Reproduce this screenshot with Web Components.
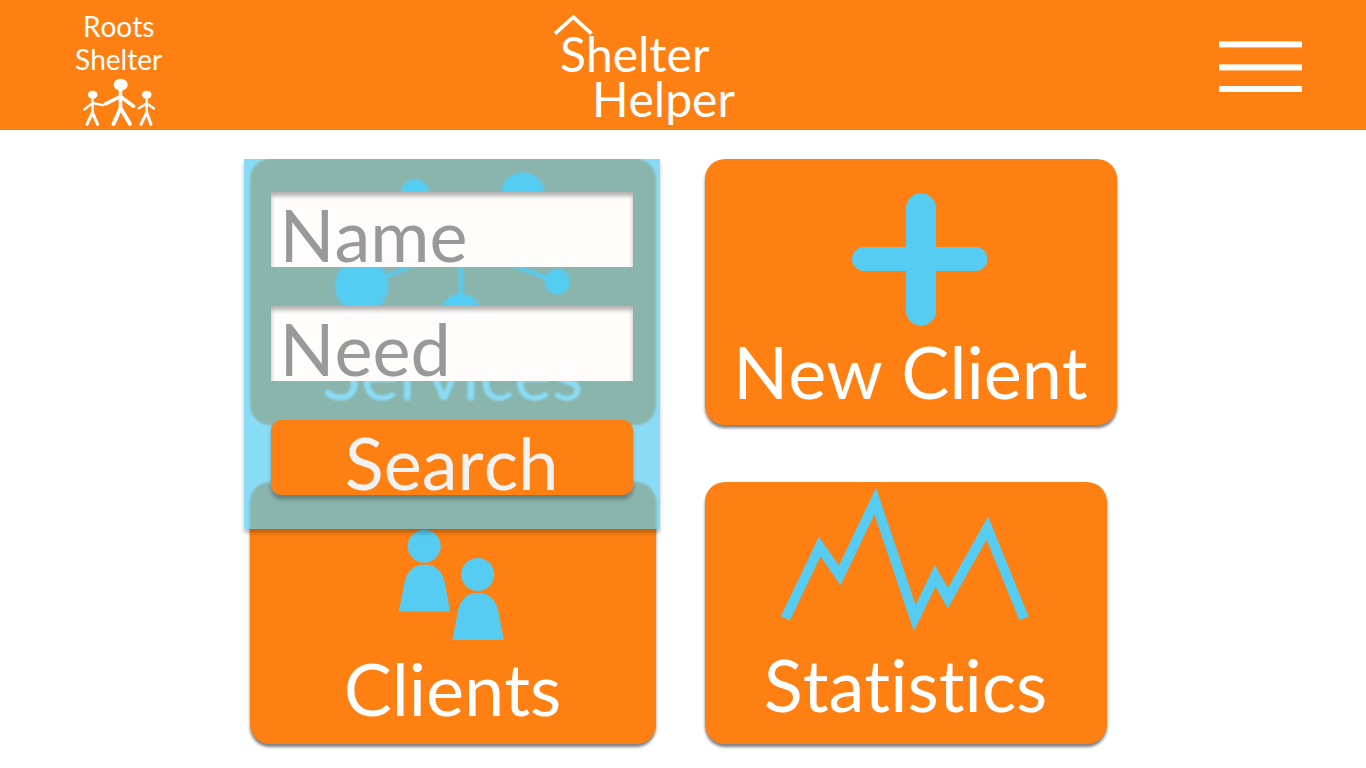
<!DOCTYPE html>
<html lang="en">
<head>
<meta charset="utf-8">
<meta name="viewport" content="width=device-width, initial-scale=1">
<title>Shelter Helper</title>
<style>
  :root {
    --orange: #ff8012;
    --blue: #56ccf2;
    --label-size: 72px;
  }
  body {
    margin: 0;
    background: #fff;
    font-family: Lato, "Open Sans", sans-serif;
    font-variant-ligatures: none;
    font-kerning: none;
  }
</style>
</head>
<body>
<shelter-app></shelter-app>

<script>
const define = (name, html) => {
  const template = document.createElement('template');
  template.innerHTML = html;
  customElements.define(name, class extends HTMLElement {
    constructor() {
      super();
      this.attachShadow({ mode: 'open' }).append(template.content.cloneNode(true));
    }
  });
};

define('shelter-badge', `
  <style>
    :host { display: block; }
    a {
      display: flex; flex-direction: column; align-items: center; gap: 2px;
      color: #fff; text-decoration: none; text-align: center;
      font-size: 28px; line-height: 33px;
    }
    span { display: block; }
    svg { display: block; }
  </style>
  <a href="#">
    <span><slot></slot></span>
    <svg width="74" height="49" viewBox="0 0 74 49" fill="none" stroke="#fff" stroke-linecap="round" aria-hidden="true">
      <g fill="#fff" stroke="none">
        <ellipse cx="38.7" cy="6.7" rx="7" ry="6"/>
        <ellipse cx="10.7" cy="16.7" rx="4.8" ry="4"/>
        <ellipse cx="64.7" cy="16.7" rx="4.8" ry="4"/>
      </g>
      <g stroke-width="3.6">
        <path d="M38.5 10V30M23.5 25.8L38.5 18.5L51.5 28.2"/>
        <path d="M31.5 46L38.6 30L48 46" stroke-width="4"/>
      </g>
      <g stroke-width="2.4">
        <path d="M10.6 18V35M2.2 31.6L10.5 25L21 27.2M56.8 30.2L64.7 25.4L72 30.4M64.7 18V35"/>
        <path d="M5 46.4L10.5 34.6L15.6 46.4M59 46.4L64.7 34.6L69 46.4" stroke-width="3"/>
      </g>
    </svg>
  </a>`);

define('app-logo', `
  <style>
    :host { display: block; }
    h1 {
      position: relative; margin: 0; padding: 16px 0 0 6px;
      color: #fff; font-size: 48px; line-height: 45px; font-weight: 400;
      white-space: nowrap;
    }
    span { display: block; }
    .second { padding-left: 32px; }
    svg { position: absolute; left: 0; top: 0; }
  </style>
  <h1>
    <svg width="40" height="20" viewBox="0 0 40 20" aria-hidden="true">
      <path d="M1 18.6L19.3 2.2L37.4 18.6" fill="none" stroke="#fff" stroke-width="3.8"/>
    </svg>
    <span><slot name="first"></slot></span>
    <span class="second"><slot name="second"></slot></span>
  </h1>`);

define('menu-button', `
  <style>
    :host { display: block; }
    button { display: block; margin: 0; padding: 0; border: 0; background: none; cursor: pointer; }
    svg { display: block; }
  </style>
  <button type="button" aria-label="Menu">
    <svg width="83" height="52" viewBox="0 0 83 52" fill="#fff" aria-hidden="true">
      <rect y="0.4" width="83" height="6"/>
      <rect y="23.4" width="83" height="6"/>
      <rect y="45" width="83" height="6"/>
    </svg>
  </button>`);

define('app-header', `
  <style>
    :host { display: block; background: var(--orange); }
    header {
      display: grid; grid-template-columns: 18fr 25fr auto; align-items: start;
      box-sizing: border-box; min-height: 130px; padding: 0 64px 0 75px;
    }
    shelter-badge { justify-self: start; padding-top: 10px; }
    app-logo { justify-self: start; padding-top: 15px; }
    menu-button { padding-top: 41px; }
  </style>
  <header>
    <shelter-badge>Roots<br>Shelter</shelter-badge>
    <app-logo><span slot="first">Shelter</span><span slot="second">Helper</span></app-logo>
    <menu-button></menu-button>
  </header>`);

define('nav-card', `
  <style>
    :host { display: block; }
    a {
      display: flex; flex-direction: column; align-items: center;
      box-sizing: border-box; height: 100%;
      border-radius: 20px; background: var(--orange);
      box-shadow: var(--card-shadow, 0 3px 3px rgba(0, 0, 0, .5));
      color: #fff; text-decoration: none;
      font-size: var(--label-size); line-height: 72px; white-space: nowrap;
    }
    ::slotted(svg) { display: block; flex: none; }
  </style>
  <a href="#"><slot name="icon"></slot><slot></slot></a>`);

define('text-field', `
  <style>
    :host { display: block; }
    input {
      display: block; box-sizing: border-box; width: 100%; height: 75px;
      margin: 0; padding: 9px 9px 0; border: 0; border-radius: 0;
      background: #fffcfc; box-shadow: inset 0 4px 4px rgba(0, 0, 0, .3);
      color: #333; font-family: inherit; font-size: var(--label-size); line-height: 66px;
      font-kerning: inherit; outline: none;
    }
    input::placeholder { color: #999; opacity: 1; }
  </style>
  <input type="text">`);

customElements.define('search-field', class extends customElements.get('text-field') {
  connectedCallback() {
    const input = this.shadowRoot.querySelector('input');
    input.placeholder = this.getAttribute('label');
    input.setAttribute('aria-label', this.getAttribute('label'));
  }
});

define('search-panel', `
  <style>
    :host { display: block; }
    form {
      display: flex; flex-direction: column; gap: 39px;
      box-sizing: border-box; padding: 33px 27px 34px;
      background: rgb(86 204 242 / .69);
      -webkit-backdrop-filter: blur(1px);
      backdrop-filter: blur(1px);
      box-shadow: 0 4px 4px rgba(0, 0, 0, .25);
    }
    button {
      height: 75px; margin: 0; padding: 9px 0 0; border: 0; border-radius: 10px;
      background: var(--orange); box-shadow: 0 4px 4px rgba(0, 0, 0, .3);
      color: #f2f2f2; font-family: inherit; font-size: var(--label-size); line-height: 66px;
      font-kerning: inherit; cursor: pointer;
    }
  </style>
  <form>
    <search-field label="Name"></search-field>
    <search-field label="Need"></search-field>
    <button type="button">Search</button>
  </form>`);

define('shelter-app', `
  <style>
    :host { display: block; }
    main {
      display: grid; grid-template-columns: 406fr 412fr;
      grid-template-rows: minmax(266px, auto) minmax(262px, auto);
      gap: 57px 49px;
      max-width: 867px; margin: 0 auto; padding: 29px 24px 24px;
    }
    .services { position: relative; display: grid; z-index: 1; }
    .services nav-card { --card-shadow: none; }
    search-panel { position: absolute; top: 0; left: -6px; right: -4px; }
    .statistics { margin-right: 10px; }
  </style>
  <app-header></app-header>
  <main>
    <div class="services">
      <nav-card>
        <svg slot="icon" width="406" height="177" viewBox="0 0 406 177" fill="#56ccf2" aria-hidden="true">
          <path d="M211 87L112 127M211 87V155M211 87L307 123M211 87L165 35M211 87L273 35" stroke="#56ccf2" stroke-width="4"/>
          <circle cx="165" cy="34.5" r="14.2"/>
          <circle cx="272.7" cy="35.3" r="22"/>
          <circle cx="111.7" cy="127" r="26.7"/>
          <circle cx="307.3" cy="122.7" r="12.7"/>
          <circle cx="210.7" cy="155" r="20.5"/>
          <circle cx="211" cy="87" r="14"/>
        </svg>
        Services
      </nav-card>
      <search-panel></search-panel>
    </div>
    <nav-card>
      <svg slot="icon" width="412" height="176" viewBox="0 0 412 176" fill="#56ccf2" aria-hidden="true">
        <rect x="201" y="34.3" width="30" height="132.4" rx="15"/>
        <rect x="147" y="88" width="135.4" height="24" rx="12"/>
      </svg>
      New Client
    </nav-card>
    <nav-card>
      <svg slot="icon" width="406" height="170" viewBox="0 0 406 170" fill="#56ccf2" aria-hidden="true">
        <g>
          <circle cx="174.2" cy="64.2" r="16.5"/>
          <path d="M148.8 129.4L154.8 99C157 90 164 82.8 172 82.8H177C185 82.8 192.2 90 194.4 99L200.3 129.4Z"/>
        </g>
        <g transform="translate(53.5 28.3)">
          <circle cx="174.2" cy="64.2" r="16.5"/>
          <path d="M148.8 129.4L154.8 99C157 90 164 82.8 172 82.8H177C185 82.8 192.2 90 194.4 99L200.3 129.4Z"/>
        </g>
      </svg>
      Clients
    </nav-card>
    <nav-card class="statistics">
      <svg slot="icon" width="402" height="166" viewBox="0 0 402 166" aria-hidden="true">
        <path d="M80.3 136.3L114.7 64.7L134.7 93.3L170.2 19L209.7 136L230.2 93.7L242.8 116.3L282.3 46L319 136.3" fill="none" stroke="#56ccf2" stroke-width="10" stroke-miterlimit="10"/>
      </svg>
      Statistics
    </nav-card>
  </main>`);
</script>
</body>
</html>
